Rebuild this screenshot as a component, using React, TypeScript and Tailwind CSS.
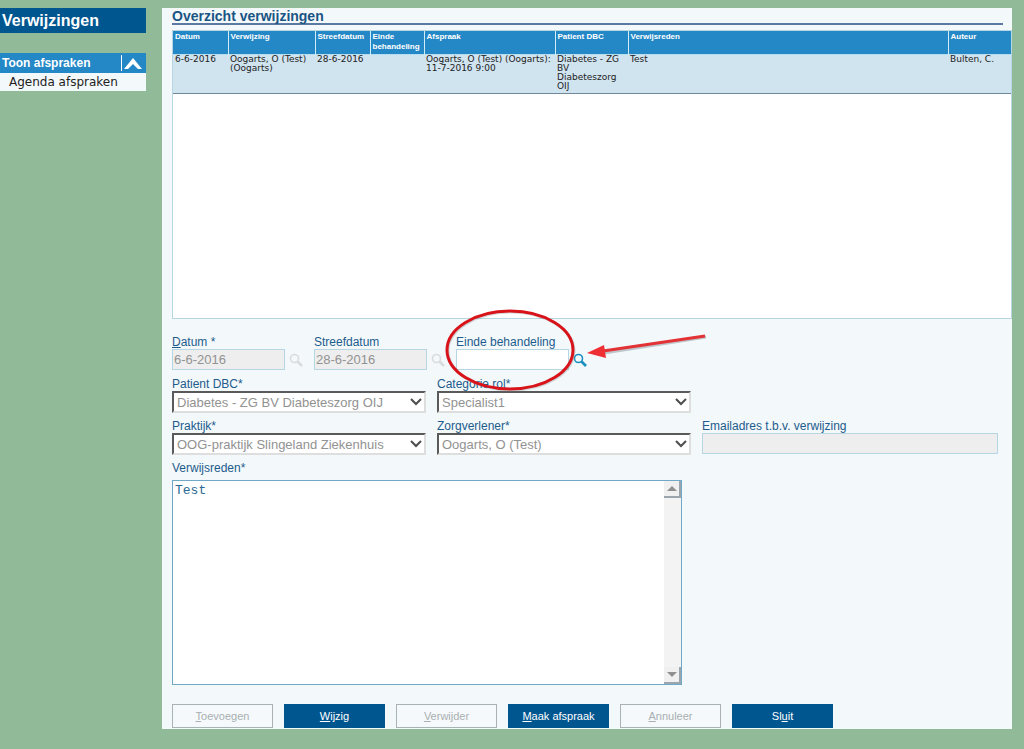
import { useState, type ReactNode } from "react";

type Column = { label: string; width: string };

const columns: Column[] = [
  { label: "Datum", width: "w-[55px]" },
  { label: "Verwijzing", width: "w-[87px]" },
  { label: "Streefdatum", width: "w-[55px]" },
  { label: "Einde behandeling", width: "w-[54px]" },
  { label: "Afspraak", width: "w-[131px]" },
  { label: "Patient DBC", width: "w-[73px]" },
  { label: "Verwijsreden", width: "" },
  { label: "Auteur", width: "w-[63px]" },
];

const referrals = [
  [
    "6-6-2016",
    "Oogarts, O (Test) (Oogarts)",
    "28-6-2016",
    "",
    "Oogarts, O (Test) (Oogarts): 11-7-2016 9:00",
    "Diabetes - ZG BV Diabeteszorg OIJ",
    "Test",
    "Bulten, C.",
  ],
];

const labelClass = "block whitespace-nowrap text-[12px] leading-[13px] text-[#1d5c8c]";

function SearchIcon({ className }: { className: string }) {
  return (
    <svg viewBox="0 0 14 14" className={`size-[14px] ${className}`} fill="none" stroke="currentColor">
      <circle cx="5.5" cy="5.5" r="4" strokeWidth="1.6" />
      <path d="M8.5 8.5l4.5 4.5" strokeWidth="2.6" />
    </svg>
  );
}

function DateField({
  id,
  label,
  value,
  disabled = false,
  children,
}: {
  id: string;
  label: ReactNode;
  value: string;
  disabled?: boolean;
  children?: ReactNode;
}) {
  const [text, setText] = useState(value);
  return (
    <div className="relative w-[131px]">
      <label htmlFor={id} className={labelClass}>
        {label}
      </label>
      <div className="flex items-center gap-1">
        <input
          id={id}
          value={text}
          disabled={disabled}
          onChange={(e) => setText(e.target.value)}
          className="h-[21px] w-[113px] border border-[#b5d6e2] bg-white px-px text-[13px] text-[#222] disabled:bg-[#eeeeee] disabled:text-[#929292]"
        />
        <button type="button" aria-label="Zoek datum" disabled={disabled} className="text-[#1c8fc0] disabled:text-[#d9dcdd]">
          <SearchIcon className="block" />
        </button>
      </div>
      {children}
    </div>
  );
}

function SelectField({ id, label, value }: { id: string; label: string; value: string }) {
  return (
    <div className="min-w-0">
      <label htmlFor={id} className={labelClass}>
        {label}
      </label>
      <div className="relative">
        <select
          id={id}
          disabled
          className="block h-[22px] w-full appearance-none border-2 border-t-[#5a5a5a] border-r-[#dedede] border-b-[#dedede] border-l-[#5a5a5a] bg-white pr-5 pl-[3px] text-[13px] text-[#929292] opacity-100"
        >
          <option>{value}</option>
        </select>
        <svg
          viewBox="0 0 12 8"
          className="pointer-events-none absolute top-[7px] right-1 h-2 w-3"
          fill="none"
          stroke="#4d4d4d"
          strokeWidth="2"
        >
          <path d="M1 1l5 5 5-5" />
        </svg>
      </div>
    </div>
  );
}

function ActionButton({ disabled = false, children }: { disabled?: boolean; children: ReactNode }) {
  return (
    <button
      type="button"
      disabled={disabled}
      className="h-6 w-[101px] border border-[#00568f] bg-[#00568f] text-[11px] text-white disabled:border-[#a9b2b5] disabled:bg-[#f5f9fb] disabled:text-[#a9afb1]"
    >
      {children}
    </button>
  );
}

function Highlight() {
  return (
    <svg
      viewBox="0 0 275 90"
      className="pointer-events-none absolute -top-8 -left-4 z-10 h-[90px] w-[275px] max-w-none"
      fill="none"
    >
      <ellipse cx="71" cy="47" rx="63" ry="39" stroke="#7c8a90" strokeOpacity="0.3" strokeWidth="3" />
      <ellipse cx="70" cy="46" rx="63" ry="39" stroke="#d8141a" strokeWidth="3" />
      <path d="M266 33L164 49" stroke="#7c8a90" strokeOpacity="0.45" strokeWidth="3" />
      <path d="M265 32L163 47" stroke="#e33236" strokeWidth="3" />
      <path d="M147 49l17-8 2 13z" fill="#ee3035" />
    </svg>
  );
}

function ReferralTable() {
  return (
    <div className="min-h-[289px] border border-[#b5d6e2] bg-white">
      <table className="w-full table-fixed border-collapse text-left">
        <thead>
          <tr className="h-[23px] bg-[#2487c6] align-top">
            {columns.map((c) => (
              <th
                key={c.label}
                className={`${c.width} border-r border-[#d3ecf6] px-0.5 pt-px text-[8px] leading-[10px] font-bold text-white last:border-r-0`}
              >
                {c.label}
              </th>
            ))}
          </tr>
        </thead>
        <tbody>
          {referrals.map((row) => (
            <tr key={row[0]} className="h-[39px] border-t border-b border-t-[#b5dff0] border-b-[#71879b] bg-[#d0e4f0] align-top">
              {row.map((cell, i) => (
                <td
                  key={columns[i].label}
                  className="px-0.5 text-[9px] leading-[9px] text-[#222]"
                  style={{ fontFamily: '"DejaVu Sans", Verdana, sans-serif' }}
                >
                  {cell}
                </td>
              ))}
            </tr>
          ))}
        </tbody>
      </table>
    </div>
  );
}

export default function App() {
  const [open, setOpen] = useState(true);
  const [reason, setReason] = useState("Test");

  return (
    <div className="flex min-h-screen items-start gap-4 bg-[#91bb98] pt-2 pr-3 font-['Liberation_Sans',Arial,sans-serif]">
      <aside className="w-[146px] shrink-0">
        <h1 className="h-[25px] bg-[#00568f] pl-0.5 text-[16px] leading-[25px] font-bold text-white">Verwijzingen</h1>
        <nav className="mt-5">
          <button
            type="button"
            aria-expanded={open}
            onClick={() => setOpen(!open)}
            className="flex h-5 w-full items-center justify-between bg-[#2487c6] pr-1 pl-0.5 text-[12px] font-bold text-white"
          >
            Toon afspraken
            <span className="flex h-4 items-center border-l border-white pl-0.5">
              <svg viewBox="0 0 18 11" className="h-[11px] w-[18px]" fill="white">
                <path d="M0 11L9 0l9 11h-4L9 6l-5 5z" />
              </svg>
            </span>
          </button>
          {open && (
            <a
              href="#agenda"
              className="block h-[18px] bg-[#f3f8fb] pl-[9px] text-[12px] leading-[18px] text-[#222]"
              style={{ fontFamily: '"DejaVu Sans", Verdana, sans-serif' }}
            >
              Agenda afspraken
            </a>
          )}
        </nav>
      </aside>

      <main className="min-w-0 flex-1 bg-[#f3f8fb] pb-px pl-[10px]">
        <h2 className="mr-[9px] mb-[5px] h-[17px] border-b-2 border-[#5a7aa3] text-[14px] leading-4 font-bold text-[#1b5583]">
          Overzicht verwijzingen
        </h2>
        <ReferralTable />

        <form className="mt-[17px]" onSubmit={(e) => e.preventDefault()}>
          <div className="flex gap-[11px]">
            <DateField
              id="datum"
              label={
                <>
                  <u>D</u>atum *
                </>
              }
              value="6-6-2016"
              disabled
            />
            <DateField id="streefdatum" label="Streefdatum" value="28-6-2016" disabled />
            <DateField id="einde" label="Einde behandeling" value="">
              <Highlight />
            </DateField>
          </div>

          <div className="mt-2 mr-[14px] grid grid-cols-[254fr_254fr_296fr] gap-x-[11px] gap-y-[7px]">
            <SelectField id="dbc" label="Patient DBC*" value="Diabetes - ZG BV Diabeteszorg OIJ" />
            <SelectField id="rol" label="Categorie rol*" value="Specialist1" />
            <div />
            <SelectField id="praktijk" label="Praktijk*" value="OOG-praktijk Slingeland Ziekenhuis" />
            <SelectField id="zorgverlener" label="Zorgverlener*" value="Oogarts, O (Test)" />
            <div className="min-w-0">
              <label htmlFor="email" className={labelClass}>
                Emailadres t.b.v. verwijzing
              </label>
              <input
                id="email"
                type="email"
                disabled
                className="block h-[21px] w-full border border-[#b5d6e2] bg-[#eeeeee] px-px text-[13px]"
              />
            </div>
          </div>

          <label htmlFor="reden" className={`${labelClass} mt-[7px]`}>
            Verwijsreden*
          </label>
          <div className="mt-[5px] flex h-[205px] max-w-[510px] border border-[#6fa9c6] bg-white">
            <textarea
              id="reden"
              value={reason}
              onChange={(e) => setReason(e.target.value)}
              className="min-w-0 flex-1 resize-none px-0.5 pt-0.5 font-['Liberation_Mono','Courier_New',monospace] text-[13px] leading-4 text-[#2a6a94] outline-none"
            />
            <div className="flex w-[17px] flex-col justify-between bg-[#f3f3f3]">
              <button
                type="button"
                aria-label="Omhoog"
                className="flex h-[17px] items-center justify-center border-r-2 border-b-2 border-[#9aa5ad] bg-[#f0f0f0]"
              >
                <svg viewBox="0 0 10 5" className="h-[5px] w-[10px]" fill="#8f8f8f">
                  <path d="M0 5l5-5 5 5z" />
                </svg>
              </button>
              <button
                type="button"
                aria-label="Omlaag"
                className="flex h-[17px] items-center justify-center border-r-2 border-b-2 border-[#9aa5ad] bg-[#f0f0f0]"
              >
                <svg viewBox="0 0 10 5" className="h-[5px] w-[10px]" fill="#8f8f8f">
                  <path d="M0 0l5 5 5-5z" />
                </svg>
              </button>
            </div>
          </div>

          <div className="mt-[19px] flex gap-[11px]">
            <ActionButton disabled>
              <u>T</u>oevoegen
            </ActionButton>
            <ActionButton>
              <u>W</u>ijzig
            </ActionButton>
            <ActionButton disabled>
              <u>V</u>erwijder
            </ActionButton>
            <ActionButton>
              <u>M</u>aak afspraak
            </ActionButton>
            <ActionButton disabled>
              <u>A</u>nnuleer
            </ActionButton>
            <ActionButton>
              Sl<u>u</u>it
            </ActionButton>
          </div>
        </form>
      </main>
    </div>
  );
}
